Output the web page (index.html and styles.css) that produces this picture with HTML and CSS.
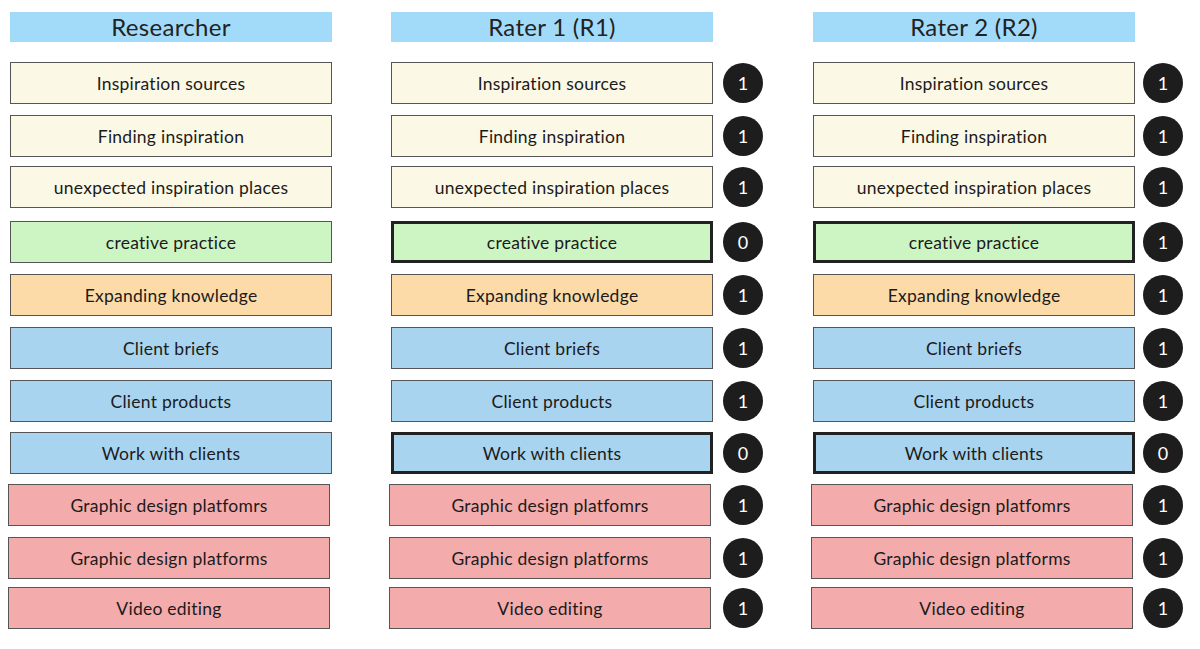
FILE: index.html
```html
<!DOCTYPE html>
<html lang="en">
<head>
<meta charset="utf-8">
<title>Coding agreement</title>
<link rel="stylesheet" href="styles.css">
</head>
<body>
<div class="board">
  <div class="col col-researcher">
    <div class="head">Researcher</div>
    <div class="row"><div class="box yellow">Inspiration sources</div></div>
    <div class="row"><div class="box yellow">Finding inspiration</div></div>
    <div class="row"><div class="box yellow">unexpected inspiration places</div></div>
    <div class="row"><div class="box green">creative practice</div></div>
    <div class="row"><div class="box orange">Expanding knowledge</div></div>
    <div class="row"><div class="box blue">Client briefs</div></div>
    <div class="row"><div class="box blue">Client products</div></div>
    <div class="row"><div class="box blue">Work with clients</div></div>
    <div class="row"><div class="box pink">Graphic design platfomrs</div></div>
    <div class="row"><div class="box pink">Graphic design platforms</div></div>
    <div class="row"><div class="box pink">Video editing</div></div>
  </div>

  <div class="col col-r1">
    <div class="head">Rater 1 (R1)</div>
    <div class="row"><div class="box yellow">Inspiration sources</div><div class="score">1</div></div>
    <div class="row"><div class="box yellow">Finding inspiration</div><div class="score">1</div></div>
    <div class="row"><div class="box yellow">unexpected inspiration places</div><div class="score">1</div></div>
    <div class="row"><div class="box green bold">creative practice</div><div class="score">0</div></div>
    <div class="row"><div class="box orange">Expanding knowledge</div><div class="score">1</div></div>
    <div class="row"><div class="box blue">Client briefs</div><div class="score">1</div></div>
    <div class="row"><div class="box blue">Client products</div><div class="score">1</div></div>
    <div class="row"><div class="box blue bold">Work with clients</div><div class="score">0</div></div>
    <div class="row"><div class="box pink">Graphic design platfomrs</div><div class="score">1</div></div>
    <div class="row"><div class="box pink">Graphic design platforms</div><div class="score">1</div></div>
    <div class="row"><div class="box pink">Video editing</div><div class="score">1</div></div>
  </div>

  <div class="col col-r2">
    <div class="head">Rater 2 (R2)</div>
    <div class="row"><div class="box yellow">Inspiration sources</div><div class="score">1</div></div>
    <div class="row"><div class="box yellow">Finding inspiration</div><div class="score">1</div></div>
    <div class="row"><div class="box yellow">unexpected inspiration places</div><div class="score">1</div></div>
    <div class="row"><div class="box green bold">creative practice</div><div class="score">1</div></div>
    <div class="row"><div class="box orange">Expanding knowledge</div><div class="score">1</div></div>
    <div class="row"><div class="box blue">Client briefs</div><div class="score">1</div></div>
    <div class="row"><div class="box blue">Client products</div><div class="score">1</div></div>
    <div class="row"><div class="box blue bold">Work with clients</div><div class="score">0</div></div>
    <div class="row"><div class="box pink">Graphic design platfomrs</div><div class="score">1</div></div>
    <div class="row"><div class="box pink">Graphic design platforms</div><div class="score">1</div></div>
    <div class="row"><div class="box pink">Video editing</div><div class="score">1</div></div>
  </div>
</div>
</body>
</html>
```

FILE: styles.css
```css
html, body {
  margin: 0;
  padding: 0;
  background: #ffffff;
}

body {
  font-family: "Lato", "Open Sans", "Liberation Sans", sans-serif;
  color: #1b1b1b;
  width: 1200px;
  height: 649px;
  overflow: hidden;
}

.board {
  display: flex;
  align-items: flex-start;
  padding: 12px 0 0 10px;
}

.col {
  display: flex;
  flex-direction: column;
}

.col-researcher {
  width: 322px;
  margin-right: 59px;
}

.col-r1 {
  width: 372px;
  margin-right: 50px;
}

.col-r2 {
  width: 370px;
}

.head {
  width: 322px;
  height: 30px;
  background: #a2dbf9;
  font-size: 24px;
  line-height: 30px;
  text-align: center;
  color: #222;
  letter-spacing: 0.3px;
}

.row {
  display: flex;
  align-items: center;
  gap: 10px;
}

.col-r2 .row {
  gap: 8px;
}

.row:nth-child(2)  { margin-top: 20px; }
.row:nth-child(3)  { margin-top: 11px; }
.row:nth-child(4)  { margin-top: 9px; }
.row:nth-child(5)  { margin-top: 13px; }
.row:nth-child(6)  { margin-top: 11px; }
.row:nth-child(7)  { margin-top: 11px; }
.row:nth-child(8)  { margin-top: 11px; }
.row:nth-child(9)  { margin-top: 10px; }
.row:nth-child(10) { margin-top: 10px; }
.row:nth-child(11) { margin-top: 11px; }
.row:nth-child(12) { margin-top: 8px; }

.box {
  box-sizing: border-box;
  width: 322px;
  height: 42px;
  border: 1px solid #555;
  display: flex;
  align-items: center;
  justify-content: center;
  font-size: 17.5px;
  letter-spacing: 0.25px;
  flex: none;
}

.box.bold {
  border: 3px solid #222;
}

.yellow { background: #fbf8e5; }
.green  { background: #cdf5c4; }
.orange { background: #fddba9; }
.blue   { background: #a9d4ef; }
.pink   {
  background: #f4abac;
  margin-left: -2px;
  margin-right: 2px;
}

.score {
  width: 40px;
  height: 40px;
  border-radius: 50%;
  background: #1d1d1d;
  color: #fff;
  display: flex;
  align-items: center;
  justify-content: center;
  font-size: 18px;
  flex: none;
}
```
